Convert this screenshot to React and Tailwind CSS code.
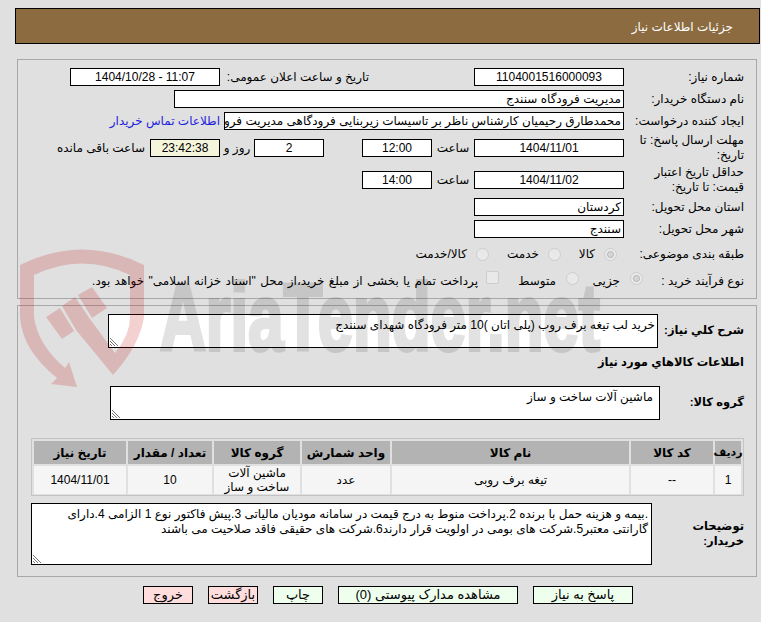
const Box = ({ w, center, bg, children, h = "h-[18px]" }) => (
  <div
    className={`${w} ${h} shrink-0 border border-black px-[2px] overflow-hidden whitespace-nowrap leading-[16px] ${center ? "text-center" : "text-right"} ${bg || "bg-white"}`}
  >
    {children}
  </div>
);

const Label = ({ children }) => <div className="w-[120px] shrink-0 pl-[4px] leading-[15px]">{children}</div>;

const Radio = ({ checked, label, labelClass, lift }) => (
  <div className="flex items-center">
    <span
      className={`w-[13px] h-[13px] shrink-0 rounded-full border border-[#cdcdcd] bg-[#e9e9e9] flex items-center justify-center ${lift ? "-mt-[5px]" : ""}`}
    >
      {checked && <span className="w-[7px] h-[7px] rounded-full border border-[#b5b5b5] bg-[#d6d6d6]" />}
    </span>
    <span className={labelClass}>{label}</span>
  </div>
);

const Resize = () => (
  <svg className="absolute left-[1px] bottom-[1px]" width="9" height="9" viewBox="0 0 9 9">
    <path d="M0 1L8 9M0 4L5 9M0 7L2 9" stroke="#777" strokeWidth="1" fill="none" />
  </svg>
);

const Area = ({ w, h, pad, children }) => (
  <div className={`${w} ${h} ${pad} relative shrink-0 border border-black bg-white leading-[15px]`}>
    {children}
    <Resize />
  </div>
);

const Th = ({ w, small, children }) => (
  <div className={`${w} h-[23px] bg-[#b3b3b3] flex items-center justify-center font-bold whitespace-nowrap ${small ? "text-[11px]" : ""}`}>
    {children}
  </div>
);

const Td = ({ w, children }) => (
  <div className={`${w} h-[28px] bg-[#f5f5f5] flex items-center justify-center text-center leading-[14px]`}>{children}</div>
);

const Btn = ({ w, pink, children }) => (
  <button className={`${w} h-[18px] border border-black leading-[16px] text-[13px] ${pink ? "bg-[#ffdddd]" : "bg-[#eeffee]"}`}>
    {children}
  </button>
);

const Watermark = () => (
  <div dir="ltr" className="absolute inset-0 pointer-events-none">
    <svg width="761" height="622" viewBox="0 0 761 622">
      <g fill="#c00000" fillOpacity="0.18">
        <path d="M20 265 Q82 234 144 265 L144 317 Q140 345 113 375 L76 330 L62 306 L75 297 L90 319 L115 353 Q130 335 130 317 L130 275 Q82 252 34 275 L34 317 Q38 345 65 368 L69 362 L77 387 L51 384 L57 378 Q22 350 20 317 Z" />
        <path d="M46 317 L60 308 L74 331 L62 339 Z" />
        <path d="M78 295 L92 287 L107 308 L92 318 Z" />
      </g>
      <g opacity="0.11">
        <text
          x="160"
          y="350"
          textLength="440"
          lengthAdjust="spacingAndGlyphs"
          fontFamily="'Liberation Sans', sans-serif"
          fontWeight="700"
          fontSize="95"
          fill="#000"
          stroke="#000"
          strokeWidth="4"
        >
          AriaTender.net
        </text>
      </g>
    </svg>
  </div>
);

export default function App() {
  return (
    <div
      dir="rtl"
      className="relative w-[761px] h-[622px] overflow-hidden bg-[#e0e0e0] text-[12px] text-black pt-[8px]"
      style={{ fontFamily: "'Liberation Sans', 'DejaVu Sans', sans-serif" }}
    >
      <div className="ml-[15px] mr-[1px] h-[36px] bg-[#8b6b3f] border border-black flex items-center pr-[26px] pt-[2px] text-white text-[12px]">
        جزئیات اطلاعات نیاز
      </div>

      <div className="mt-[15px] ml-[17px] mr-[4px] h-[240px] border border-[#a8a8a8] pr-[12px] pt-[8px]">
        <div className="flex items-center h-[18px]">
          <Label>شماره نیاز:</Label>
          <Box w="w-[150px]" center>1104001516000093</Box>
          <div className="w-[105px] shrink-0" />
          <div className="w-[149px] shrink-0">تاریخ و ساعت اعلان عمومی:</div>
          <Box w="w-[150px]" center>
            <span dir="ltr">1404/10/28 - 11:07</span>
          </Box>
        </div>
        <div className="flex items-center h-[18px] mt-[4px]">
          <Label>نام دستگاه خریدار:</Label>
          <Box w="w-[450px]">مدیریت فرودگاه سنندج</Box>
        </div>
        <div className="flex items-center h-[18px] mt-[4px]">
          <Label>ایجاد کننده درخواست:</Label>
          <Box w="w-[400px]">محمدطارق رحیمیان کارشناس ناظر بر تاسیسات زیربنایی فرودگاهی مدیریت فرو</Box>
          <a className="mr-[4px] text-[#2222dd]">اطلاعات تماس خریدار</a>
        </div>
        <div className="flex items-center h-[30px] mt-[3px]">
          <Label>مهلت ارسال پاسخ: تا تاریخ:</Label>
          <Box w="w-[150px]" center>1404/11/01</Box>
          <div className="w-[42px] shrink-0 text-center">ساعت</div>
          <Box w="w-[70px]" center>12:00</Box>
          <div className="w-[38px] shrink-0" />
          <Box w="w-[70px]" center>2</Box>
          <div className="w-[34px] shrink-0 text-center">روز و</div>
          <Box w="w-[70px]" center bg="bg-[#f5f5dc]">23:42:38</Box>
          <div className="mr-[5px]">ساعت باقی مانده</div>
        </div>
        <div className="flex items-center h-[30px] mt-[2px]">
          <Label>حداقل تاریخ اعتبار قیمت: تا تاریخ:</Label>
          <Box w="w-[150px]" center>1404/11/02</Box>
          <div className="w-[42px] shrink-0 text-center">ساعت</div>
          <Box w="w-[70px]" center>14:00</Box>
        </div>
        <div className="flex items-center h-[18px] mt-[3px]">
          <Label>استان محل تحویل:</Label>
          <Box w="w-[150px]">کردستان</Box>
        </div>
        <div className="flex items-center h-[18px] mt-[4px]">
          <Label>شهر محل تحویل:</Label>
          <Box w="w-[150px]">سنندج</Box>
        </div>
        <div className="flex items-center h-[18px] mt-[7px]">
          <Label>طبقه بندی موضوعی:</Label>
          <div className="w-[7px] shrink-0" />
          <Radio checked label="کالا" labelClass="mr-[9px] w-[34px]" />
          <Radio label="خدمت" labelClass="mr-[9px] w-[50px]" />
          <Radio label="کالا/خدمت" labelClass="mr-[9px]" />
        </div>
        <div className="flex items-center h-[18px] mt-[9px]">
          <div className="w-[101px] shrink-0 pl-[4px]">نوع فرآیند خرید :</div>
          <Radio checked lift label="جزیی" labelClass="mr-[10px] w-[41px]" />
          <Radio lift label="متوسط" labelClass="mr-[10px] w-[57px]" />
          <span className="w-[13px] h-[13px] -mt-[7px] shrink-0 rounded-[2px] border border-[#cdcdcd] bg-[#e9e9e9]" />
          <span className="mr-[8px] whitespace-nowrap [word-spacing:1px]">پرداخت تمام یا بخشی از مبلغ خرید،از محل "اسناد خزانه اسلامی" خواهد بود.</span>
        </div>
      </div>

      <div className="mt-[6px] ml-[17px] mr-[4px] h-[272px] border border-[#a8a8a8] pr-[12px] pt-[8px]">
        <div className="flex items-center h-[34px]">
          <div className="w-[86px] shrink-0 font-bold text-[11.5px] whitespace-nowrap">شرح کلي نیاز:</div>
          <Area w="w-[550px]" h="h-[34px]" pad="pt-[3px] pr-[2px]">
            <span className="whitespace-nowrap">خرید لب تیغه برف روب (پلی اتان )10 متر فرودگاه شهدای سنندج</span>
          </Area>
        </div>
        <div className="mt-[7px] h-[15px] leading-[15px] font-bold text-[11.5px]">اطلاعات کالاهاي مورد نیاز</div>
        <div className="flex items-center h-[34px] mt-[16px]">
          <div className="w-[84px] shrink-0 font-bold text-[11.5px]">گروه کالا:</div>
          <Area w="w-[550px]" h="h-[34px]" pad="pt-[3px] pr-[6px]">ماشین آلات ساخت و ساز</Area>
        </div>
        <div className="mt-[18px] w-[713px] h-[58px] border border-[#c4c4c4] p-[2px] flex flex-col gap-[2px]">
          <div className="flex gap-[2px]">
            <Th w="w-[26px]" small>ردیف</Th>
            <Th w="w-[82px]">کد کالا</Th>
            <Th w="w-[237px]">نام کالا</Th>
            <Th w="w-[88px]">واحد شمارش</Th>
            <Th w="w-[86px]">گروه کالا</Th>
            <Th w="w-[84px]">تعداد / مقدار</Th>
            <Th w="w-[92px]">تاریخ نیاز</Th>
          </div>
          <div className="flex gap-[2px]">
            <Td w="w-[26px]">1</Td>
            <Td w="w-[82px]">--</Td>
            <Td w="w-[237px]">تیغه برف روبی</Td>
            <Td w="w-[88px]">عدد</Td>
            <Td w="w-[86px]">ماشین آلات ساخت و ساز</Td>
            <Td w="w-[84px]">10</Td>
            <Td w="w-[92px]">1404/11/01</Td>
          </div>
        </div>
        <div className="flex items-center h-[62px] mt-[7px]">
          <div className="w-[92px] shrink-0 font-bold text-[11.5px] leading-[15px]">توضیحات خریدار:</div>
          <Area w="w-[621px]" h="h-[62px]" pad="pt-[3px] pr-[3px] pl-[10px]">
            .بیمه و هزینه حمل با برنده 2.پرداخت منوط به درج قیمت در سامانه مودیان مالیاتی 3.پیش فاکتور نوع 1 الزامی 4.دارای گارانتی معتبر5.شرکت های بومی در اولویت قرار دارند6.شرکت های حقیقی فاقد صلاحیت می باشند
          </Area>
        </div>
      </div>

      <div className="mt-[9px] mr-[128px] flex gap-[15px]">
        <Btn w="w-[100px]">پاسخ به نیاز</Btn>
        <Btn w="w-[180px]">مشاهده مدارک پیوستی (0)</Btn>
        <Btn w="w-[50px]">چاپ</Btn>
        <Btn w="w-[50px]" pink>بازگشت</Btn>
        <Btn w="w-[50px]" pink>خروج</Btn>
      </div>

      <Watermark />
    </div>
  );
}
